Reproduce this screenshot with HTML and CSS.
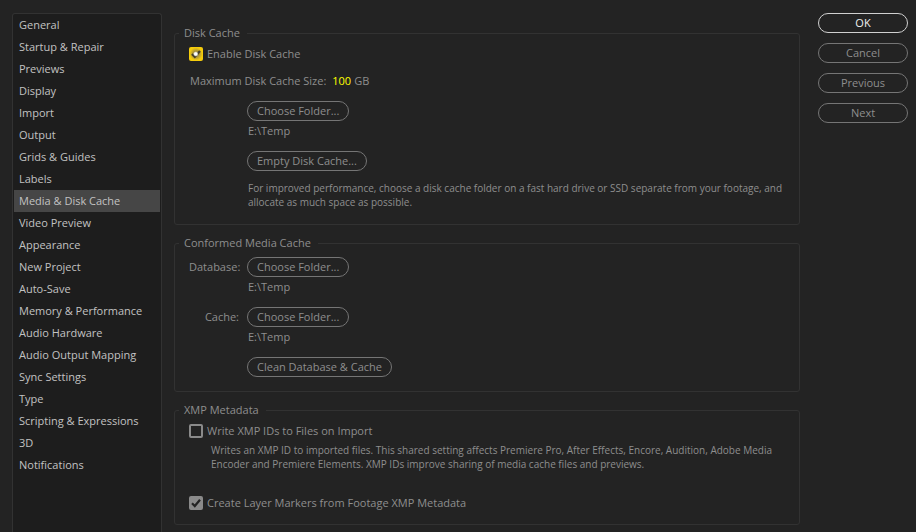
FILE: index.html
```html
<!DOCTYPE html>
<html lang="en">
<head>
<meta charset="utf-8">
<title>Preferences</title>
<link rel="stylesheet" href="styles.css">
</head>
<body>
<form class="dialog">
  <nav class="sidebar" aria-label="Categories">
    <a class="item" href="#general">General</a>
    <a class="item" href="#startup">Startup &amp; Repair</a>
    <a class="item" href="#previews">Previews</a>
    <a class="item" href="#display">Display</a>
    <a class="item" href="#import">Import</a>
    <a class="item" href="#output">Output</a>
    <a class="item" href="#grids">Grids &amp; Guides</a>
    <a class="item" href="#labels">Labels</a>
    <a class="item selected" href="#media" aria-current="page">Media &amp; Disk Cache</a>
    <a class="item" href="#video">Video Preview</a>
    <a class="item" href="#appearance">Appearance</a>
    <a class="item" href="#project">New Project</a>
    <a class="item" href="#autosave">Auto-Save</a>
    <a class="item" href="#memory">Memory &amp; Performance</a>
    <a class="item" href="#hardware">Audio Hardware</a>
    <a class="item" href="#mapping">Audio Output Mapping</a>
    <a class="item" href="#sync">Sync Settings</a>
    <a class="item" href="#type">Type</a>
    <a class="item" href="#scripting">Scripting &amp; Expressions</a>
    <a class="item" href="#3d">3D</a>
    <a class="item" href="#notifications">Notifications</a>
  </nav>

  <main class="panel">
    <fieldset class="group">
      <legend>Disk Cache</legend>
      <label class="check highlighted">
        <input type="checkbox" checked>
        <svg class="mark" viewBox="0 0 14 14" aria-hidden="true">
          <defs>
            <radialGradient id="glow">
              <stop offset="0.45" stop-color="#fff"/>
              <stop offset="1" stop-color="#fff" stop-opacity="0"/>
            </radialGradient>
          </defs>
          <path d="M3 7 5.8 9.8 11 4" fill="none" stroke="#45402c" stroke-width="2.4"/>
          <circle cx="6.8" cy="7" r="2.8" fill="url(#glow)"/>
        </svg>
        <span>Enable Disk Cache</span>
      </label>
      <div class="size-row">
        <label for="cache-size">Maximum Disk Cache Size:</label>
        <input class="size" id="cache-size" type="text" value="100">
        <span>GB</span>
      </div>
      <div class="fields">
        <button class="button" type="button">Choose Folder...</button>
        <span class="path">E:\Temp</span>
        <button class="button next-field" type="button">Empty Disk Cache...</button>
        <p class="note next-field">For improved performance, choose a disk cache folder on a fast hard drive or SSD separate from your footage, and allocate as much space as possible.</p>
      </div>
    </fieldset>

    <fieldset class="group media">
      <legend>Conformed Media Cache</legend>
      <div class="fields">
        <label class="name" for="database">Database:</label>
        <button class="button" id="database" type="button">Choose Folder...</button>
        <span class="path">E:\Temp</span>
        <label class="name next-field" for="cache">Cache:</label>
        <button class="button next-field" id="cache" type="button">Choose Folder...</button>
        <span class="path">E:\Temp</span>
        <button class="button next-field" type="button">Clean Database &amp; Cache</button>
      </div>
    </fieldset>

    <fieldset class="group">
      <legend>XMP Metadata</legend>
      <label class="check">
        <input type="checkbox">
        <span>Write XMP IDs to Files on Import</span>
      </label>
      <p class="note xmp-note">Writes an XMP ID to imported files. This shared setting affects Premiere Pro, After Effects, Encore, Audition, Adobe Media Encoder and Premiere Elements. XMP IDs improve sharing of media cache files and previews.</p>
      <label class="check">
        <input type="checkbox" checked>
        <svg class="mark" viewBox="0 0 14 14" aria-hidden="true">
          <path d="M3 7.2 5.8 10 11 3.8" fill="none" stroke="#232323" stroke-width="2.2"/>
        </svg>
        <span>Create Layer Markers from Footage XMP Metadata</span>
      </label>
    </fieldset>
  </main>

  <div class="actions">
    <button class="button primary" type="submit">OK</button>
    <button class="button" type="button">Cancel</button>
    <button class="button" type="button">Previous</button>
    <button class="button" type="button">Next</button>
  </div>
</form>
</body>
</html>
```
FILE: styles.css
```css
* {
  box-sizing: border-box;
}

body {
  margin: 0;
  background: #232323;
  color: #8e8e8e;
  font: 11px/20px "Open Sans", "Noto Sans", sans-serif;
}

.dialog {
  display: grid;
  grid-template-columns: 150px 1fr 90px;
  min-height: 100vh;
  padding: 13px 8px 0 12px;
}

.sidebar {
  padding: 0 1px;
  border: 1px solid #323232;
  border-bottom: 0;
  border-radius: 3px 3px 0 0;
  background: #1d1d1d;
}

.item {
  display: block;
  padding: 0 5px;
  color: #c2c2c2;
  line-height: 22px;
  text-decoration: none;
  white-space: nowrap;
}

.selected {
  background: #464646;
}

.panel {
  display: flex;
  flex-direction: column;
  gap: 10px;
  margin: 12px 18px 0 12px;
}

.group {
  min-width: 0;
  margin: 0;
  padding: 3px 14px 11px;
  border: 1px solid #323232;
  border-radius: 3px;
}

.media {
  padding-top: 6px;
  padding-bottom: 14px;
}

legend {
  margin-left: -10px;
  padding: 0 7px 0 5px;
  line-height: 16px;
}

.check {
  display: grid;
  grid-template-columns: 14px auto;
  column-gap: 4px;
  align-items: center;
  justify-content: start;
}

.check input {
  grid-area: 1 / 1;
  appearance: none;
  width: 14px;
  height: 14px;
  margin: 0;
  border: 2px solid #8a8a8a;
  border-radius: 2px;
}

.check input:checked {
  background: #8a8a8a;
}

.highlighted input:checked {
  border: 0;
  background: radial-gradient(circle, #a8923a 30%, #f5cc0c 65%);
}

.mark {
  grid-area: 1 / 1;
  width: 14px;
  height: 14px;
  pointer-events: none;
}

.size-row {
  display: flex;
  margin: 7px 0 10px;
  padding-left: 1px;
}

.size {
  width: 20px;
  margin: 0 2px 0 6px;
  padding: 0;
  border: 0;
  background: none;
  color: #ffff00;
  font: inherit;
}

.fields {
  display: grid;
  grid-template-columns: 50px 1fr;
  column-gap: 8px;
}

.name {
  text-align: right;
}

.fields .button,
.path,
.fields .note {
  grid-column: 2;
  justify-self: start;
}

.path,
.fields .note {
  padding-left: 1px;
}

.button {
  height: 20px;
  padding: 0 9px;
  border: 1px solid #757575;
  border-radius: 10px;
  background: none;
  color: inherit;
  font: inherit;
  line-height: 18px;
}

.note {
  margin: 0;
  font-size: 10px;
  line-height: 14px;
}

.next-field {
  margin-top: 10px;
}

.fields .note {
  margin-bottom: 4px;
}

.xmp-note {
  margin: 2px 0 22px 22px;
}

.actions {
  display: flex;
  flex-direction: column;
  gap: 10px;
}

.primary {
  border-color: #d0d0d0;
  color: #f0f0f0;
}
```
